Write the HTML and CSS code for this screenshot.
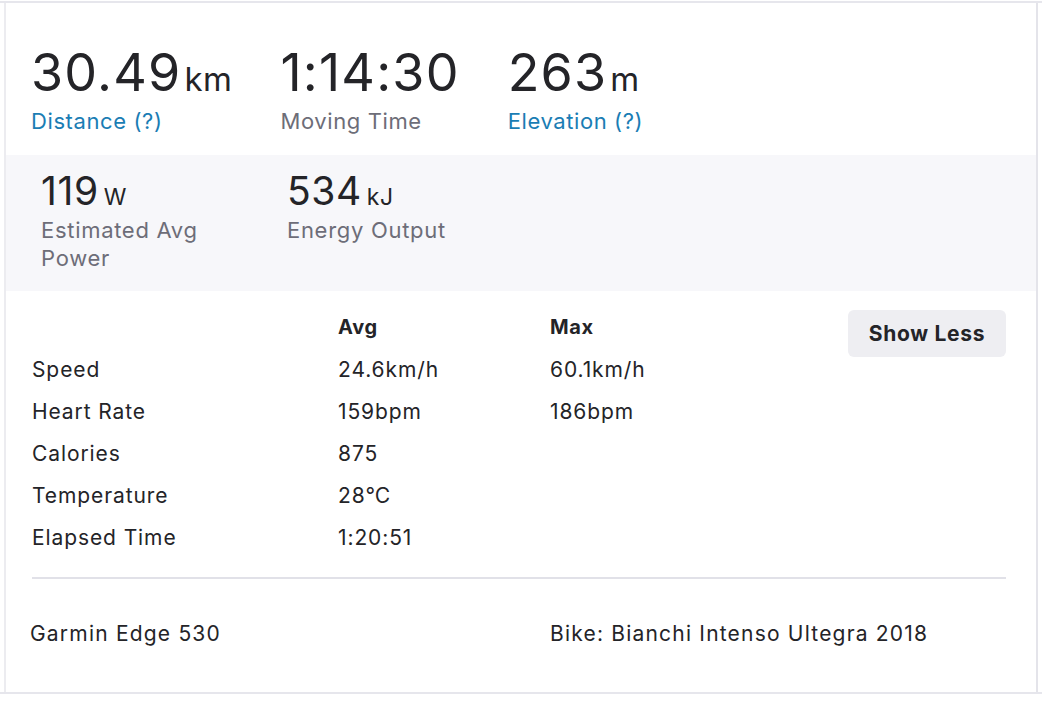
FILE: index.html
```html
<!DOCTYPE html>
<html lang="en">
<head>
<meta charset="utf-8">
<title>Activity stats</title>
<link rel="stylesheet" href="styles.css">
</head>
<body>
<div class="page">
  <section class="panel">
    <ul class="primary-stats">
      <li class="stat">
        <div class="value">30.49<abbr class="unit">km</abbr></div>
        <div class="label link">Distance (?)</div>
      </li>
      <li class="stat">
        <div class="value">1:14:30</div>
        <div class="label">Moving Time</div>
      </li>
      <li class="stat">
        <div class="value">263<abbr class="unit">m</abbr></div>
        <div class="label link">Elevation (?)</div>
      </li>
    </ul>

    <ul class="secondary-stats">
      <li class="stat small">
        <div class="value">119<abbr class="unit">W</abbr></div>
        <div class="label">Estimated Avg Power</div>
      </li>
      <li class="stat small">
        <div class="value">534<abbr class="unit">kJ</abbr></div>
        <div class="label">Energy Output</div>
      </li>
    </ul>

    <div class="more-stats">
      <div class="stats-table">
        <div class="cell head"></div>
        <div class="cell head">Avg</div>
        <div class="cell head">Max</div>
        <div class="cell action"><button class="toggle" type="button">Show Less</button></div>

        <div class="cell">Speed</div>
        <div class="cell">24.6km/h</div>
        <div class="cell">60.1km/h</div>
        <div class="cell"></div>

        <div class="cell">Heart Rate</div>
        <div class="cell">159bpm</div>
        <div class="cell">186bpm</div>
        <div class="cell"></div>

        <div class="cell">Calories</div>
        <div class="cell">875</div>
        <div class="cell"></div>
        <div class="cell"></div>

        <div class="cell">Temperature</div>
        <div class="cell">28℃</div>
        <div class="cell"></div>
        <div class="cell"></div>

        <div class="cell">Elapsed Time</div>
        <div class="cell">1:20:51</div>
        <div class="cell"></div>
        <div class="cell"></div>
      </div>

      <div class="device-row">
        <span class="device">Garmin Edge 530</span>
        <span class="gear">Bike: Bianchi Intenso Ultegra 2018</span>
      </div>
    </div>
  </section>
</div>
</body>
</html>
```

FILE: styles.css
```css
* {
  box-sizing: border-box;
}

html, body {
  margin: 0;
  padding: 0;
  background: #ffffff;
}

body {
  font-family: Inter, "Noto Sans", "Liberation Sans", sans-serif;
  color: #242428;
  padding-top: 1px;
}

ul {
  list-style: none;
  margin: 0;
  padding: 0;
}

abbr {
  text-decoration: none;
}

.page {
  border-top: 2px solid #e6e6ec;
  border-bottom: 2px solid #e6e6ec;
}

.panel {
  margin: 0 4px 0 4px;
  width: 1034px;
  border-left: 2px solid #ececf0;
  border-right: 2px solid #e4e4ea;
  height: 689px;
  display: flex;
  flex-direction: column;
}

/* headline numbers */
.primary-stats {
  display: flex;
  gap: 48px;
  padding: 41px 0 0 25px;
  height: 152px;
}

.stat .value {
  font-size: 52px;
  line-height: 58px;
  font-weight: 400;
  letter-spacing: 1.2px;
  color: #242428;
  white-space: nowrap;
}

.stat .unit {
  font-size: 33px;
  line-height: 1;
  margin-left: 3px;
  letter-spacing: 0.5px;
}

.stat .label {
  margin-top: 5px;
  font-size: 22px;
  line-height: 28px;
  letter-spacing: 0.6px;
  color: #6d6d78;
}

.stat .label.link {
  color: #1a7db4;
}

/* shaded band with derived numbers */
.secondary-stats {
  display: flex;
  gap: 36px;
  background: #f7f7fa;
  height: 136px;
  padding: 14px 0 0 35px;
}

.stat.small {
  width: 210px;
}

.stat.small .value {
  font-size: 39px;
  line-height: 44px;
  letter-spacing: 0.6px;
}

.stat.small .unit {
  font-size: 23px;
  margin-left: 5px;
}

.stat.small .label {
  margin-top: 3px;
  line-height: 28px;
  letter-spacing: 0.7px;
}

/* table of avg / max values */
.more-stats {
  padding: 15px 30px 0 26px;
}

.stats-table {
  display: grid;
  grid-template-columns: 306px 212px 1fr auto;
  grid-auto-rows: 42px;
  font-size: 21px;
  letter-spacing: 0.9px;
}

.cell {
  display: flex;
  align-items: center;
  white-space: nowrap;
}

.cell.head {
  font-weight: 700;
  font-size: 20px;
  letter-spacing: 0.6px;
}

.cell.action {
  justify-content: flex-end;
  align-items: flex-start;
  overflow: visible;
  height: 42px;
}

.toggle {
  font-family: inherit;
  font-size: 21px;
  font-weight: 700;
  letter-spacing: 0.7px;
  color: #242428;
  background: #eeeef2;
  border: none;
  border-radius: 6px;
  width: 158px;
  height: 47px;
  margin-top: 4px;
  padding: 0;
}

.device-row {
  margin-top: 19px;
  border-top: 2px solid #e1e1e8;
  display: grid;
  grid-template-columns: 518px 1fr;
  padding-top: 42px;
  font-size: 21px;
  line-height: 26px;
  letter-spacing: 1.2px;
}

.device {
  margin-left: -2px;
}
```
